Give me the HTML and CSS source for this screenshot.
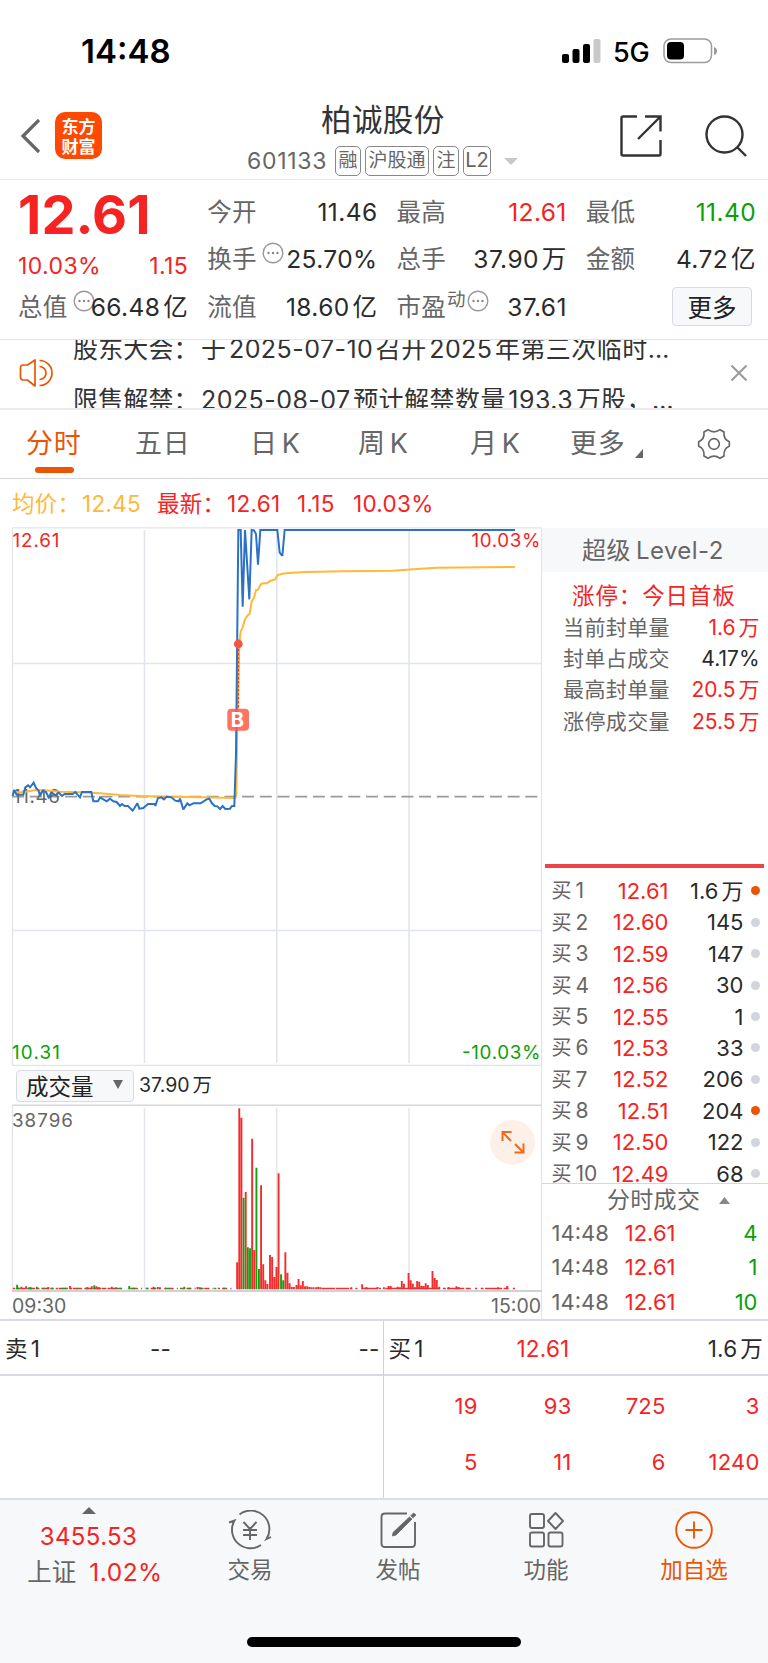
FILE: index.html
```
<!DOCTYPE html>
<html lang="zh-CN">
<head>
<meta charset="utf-8">
<title>柏诚股份 601133</title>
<link rel="stylesheet" href="styles.css">
</head>
<body>
<div class="app">
  <div class="status">
    <span class="clock">14:48</span>
    <svg class="signal" width="39" height="25" viewBox="0 0 39 25"><rect x="0" y="15" width="7" height="9" rx="2"/><rect x="10.500" y="10" width="7" height="14" rx="2"/><rect x="21" y="5" width="7" height="19" rx="2"/><rect x="31.500" y="0" width="7" height="24" rx="2" fill="#c9c9c9"/></svg>
    <span class="net">5G</span>
    <svg class="battery" width="55" height="26" viewBox="0 0 55 26"><rect x="1" y="1" width="47.500" height="23.500" rx="7" fill="none" stroke="#9b9b9b" stroke-width="1.500"/><rect x="4" y="4" width="17" height="17.500" rx="4"/><path d="M51 9q3 1 3 4t-3 4z" fill="#9b9b9b"/></svg>
  </div>

  <header class="header">
    <svg class="back" width="22" height="36" viewBox="0 0 22 36"><path d="M19 2 3 18 19 34" fill="none" stroke="#666" stroke-width="3.200"/></svg>
    <div class="logo"><span>东方</span><span>财富</span></div>
    <div class="title">
      <h1>柏诚股份</h1>
      <div class="codes"><span class="code">601133</span><b>融</b><b class="w3">沪股通</b><b class="w1">注</b><b class="w2">L2</b><i></i></div>
    </div>
    <svg class="share" width="42" height="42" viewBox="0 0 42 42"><g fill="none" stroke="#333" stroke-width="2.400"><path d="M17 1.500H3Q1.500 1.500 1.500 3V39Q1.500 40.500 3 40.500H39Q40.500 40.500 40.500 39V25"/><path d="M25 1.500H40.500V16.500M40.500 1.500 18 24"/></g></svg>
    <svg class="search" width="42" height="42" viewBox="0 0 42 42"><g fill="none" stroke="#333" stroke-width="2.400"><circle cx="19.500" cy="19.500" r="18"/><path d="M32 32 41 41"/></g></svg>
  </header>

  <section class="quote">
    <div class="col lead">
      <strong class="price">12.61</strong>
      <div class="row chg red"><span>10.03%</span><span>1.15</span></div>
      <div class="row"><label>总值<svg class="dots" viewBox="0 0 22 22"><use href="#more"/></svg></label><span>66.48<u>亿</u></span></div>
    </div>
    <div class="col">
      <div class="row"><label>今开</label><span>11.46</span></div>
      <div class="row"><label>换手<svg class="dots" viewBox="0 0 22 22"><use href="#more"/></svg></label><span>25.70%</span></div>
      <div class="row"><label>流值</label><span>18.60<u>亿</u></span></div>
    </div>
    <div class="col">
      <div class="row"><label>最高</label><span class="red">12.61</span></div>
      <div class="row"><label>总手</label><span>37.90<u>万</u></span></div>
      <div class="row"><label>市盈<sup>动</sup><svg class="dots tight" viewBox="0 0 22 22"><g id="more"><circle cx="11" cy="11" r="9.800" fill="none" stroke="#999" stroke-width="1.400"/><g fill="#888"><circle cx="6.500" cy="11" r="1.200"/><circle cx="11" cy="11" r="1.200"/><circle cx="15.500" cy="11" r="1.200"/></g></g></svg></label><span>37.61</span></div>
    </div>
    <div class="col">
      <div class="row"><label>最低</label><span class="green">11.40</span></div>
      <div class="row"><label>金额</label><span>4.72<u>亿</u></span></div>
      <div class="row end"><button class="morebtn">更多</button></div>
    </div>
  </section>

  <section class="notice">
    <svg width="34" height="30" viewBox="0 0 34 30"><g fill="none" stroke="#ea5504" stroke-width="1.700" stroke-linejoin="round"><path d="M16 2V28L8.500 22H4Q1.500 22 1.500 19V10Q1.500 7 4 7H8.500Z"/><path d="M20.500 2.500A12.500 12.500 0 0 1 20.500 27.500M20.500 8.500A6.500 6.500 0 0 1 20.500 21.500"/></g></svg>
    <div class="lines">
      <p><span class="k">股东大会：</span><span>于<u>2025-07-10</u><u>召开</u><u>2025</u><u>年第三次临时</u>…</span></p>
      <p><span class="k">限售解禁：</span><span>2025-08-07<u>预计解禁数量</u><u>193.3</u><u>万股，</u>…</span></p>
    </div>
    <svg class="close" width="18" height="18" viewBox="0 0 18 18"><path d="M1.500 1.500 16.500 16.500M16.500 1.500 1.500 16.500" stroke="#999" stroke-width="2"/></svg>
  </section>

  <nav class="tabs">
    <span class="tab on">分时</span><span class="tab">五日</span><span class="tab">日<u>K</u></span><span class="tab">周<u>K</u></span><span class="tab">月<u>K</u></span><span class="tab more">更多<svg width="8" height="9" viewBox="0 0 8 9"><path d="M8 0V9H0Z" fill="#666"/></svg></span>
    <svg class="gear" width="34" height="32" viewBox="937 52 102 96"><g fill="none" stroke="#666" stroke-width="5" stroke-linejoin="round"><path d="M970 57Q988 70 1006 57L1018 64Q1016 86 1034 93V107Q1016 114 1018 136L1006 143Q988 130 970 143L958 136Q960 114 942 107V93Q960 86 958 64Z"/><circle cx="988" cy="100" r="16"/></g></svg>
  </nav>

  <div class="info"><span class="avg">均价：</span><span class="avg v1">12.45</span><span class="v2">最新：</span><span class="v3">12.61</span><span class="v4">1.15</span><span>10.03%</span></div>

  <main class="main">
    <div class="charts">
      <svg class="chart" width="542" height="539" viewBox="0 527 542 539">
        <g stroke="#e2e5ec" stroke-width="1.600" fill="none">
          <path d="M12.500 1066V527.800H542M12 1065.500H542" stroke="#e3e5e9" stroke-width="1.300"/>
          <path d="M144.500 530V1063M276.800 530V1063M409 530V1063M12 663.500H541M12 930.500H541"/>
        </g>
        <path d="M12 796.700H541" stroke="#999" stroke-width="1.800" stroke-dasharray="12 5.700"/>
        <text x="13" y="802.500" textLength="47" class="lab">11.46</text>
        <g fill="none" stroke-linejoin="round" transform="translate(200 520) scale(.33333)">
          <path stroke="#ffb838" stroke-width="6" d="M-560 818-530 816-490 810-450 812-420 815-360 817-300 820-240 825-180 828-100 830 0 832 105 834 109 826 113 560 116 450 118 370 122 335 128 322 135 298 142 287 149 282 155 244 162 233 168 210 174 209 182 193 188 190 200 190 212 182 226 178 233 165 248 161 265 159 320 156 430 154 580 152 640 148 710 143 945 141"/>
          <path stroke="#2b72c4" stroke-width="6" stroke-linejoin="miter" stroke-miterlimit="2" d="M-562 828-558 810-550 824-530 824-524 802-516 796-510 802-499 788-492 804-484 812-480 828-472 812-462 816-454 832-444 818-434 826-424 818-414 828-406 822-382 822-374 816-360 832-354 816-326 816-320 844-306 844-300 832-290 838-280 844-270 836-260 844-250 846-240 858-234 852-226 858-216 858-202 872-188 850-182 866-170 864-156 852-136 852-134 858-126 834-116 832-108 838-100 830-86 832-74 842-64 844-60 836-50 868-38 850-32 856-20 850 2 850 20 838 28 836 36 850 44 858 52 859 60 867 68 858 76 867 90 866 96 858 103 858 108 700 115 30 122 30 128 260 135 30 148 238 155 30 162 31 168 42 174 134 181 30 232 30 239 98 247 108 254 30 945 30"/>
        </g>
        <path d="M238.300 649V710" stroke="#f5402c" stroke-width="1.700" stroke-dasharray="2.500 1.500"/>
        <circle cx="238.300" cy="644" r="4.400" fill="#f5553f"/>
        <rect x="227.300" y="708.700" width="21.700" height="22" rx="4" fill="#ff5a46" fill-opacity=".85"/>
        <text x="230.800" y="727" class="mark">B</text>
        <text x="12.500" y="547" textLength="47" class="lab r">12.61</text>
        <text x="471.500" y="547" textLength="69" class="lab r">10.03%</text>
        <text x="12" y="1058.500" textLength="48" class="lab g">10.31</text>
        <text x="462" y="1058.500" textLength="78.500" class="lab g">-10.03%</text>
      </svg>
      <div class="volbar"><button class="sel">成交量<svg width="10" height="9" viewBox="0 0 10 9"><path d="M0 0H10L5 9Z" fill="#666"/></svg></button><span>37.90<u>万</u></span></div>
      <svg class="chart" width="542" height="188" viewBox="0 1103 542 188">
        <path d="M12 1104.300H542" stroke="#d5d8e0" stroke-width="1.500"/>
        <path d="M12.500 1104V1290M144.500 1107V1288M276.800 1107V1288M409 1107V1288" stroke="#e2e5ec" stroke-width="1.400"/>
        <text x="12" y="1126" textLength="61" class="lab">38796</text>
        <g fill="none" stroke-width="5.300" transform="translate(0 1040) scale(.35714 .33333)">
          <path stroke="#f42c2c" stroke-width="5" stroke-dasharray="6 2 14 3 9 6" d="M36 742.500H340"/>
          <path stroke="#f42c2c" stroke-width="5" stroke-dasharray="6 6 14 9 3 12" d="M360 742.500H660"/>
          <path stroke="#12a012" stroke-width="5" stroke-dasharray="6 24 12 30 6 18" d="M48 742.500H640"/>
          <path stroke="#f42c2c" d="M60 745V737M73 745V736M135 745V738M196 745V735M245 745V738M257 745V736M270 745V736M276 745V738M313 745V737M430 745V737M442 745V738M448 745V739M553 745V738M559 745V739"/>
          <path stroke="#12a012" d="M48 745V731M85 745V738M103 745V737M264 745V733M325 745V739M362 745V735M516 745V737"/>
          <path stroke="#f42c2c" d="M664 745V664M670 745V202M676 745V230M688 745V453M706 745V293M712 745V627M731 745V433M737 745V670M743 745V718M749 745V729M756 745V642M762 745V648M768 745V708M774 745V678M780 745V397M799 745V634M805 745V695M811 745V727M817 745V738M823 745V738M830 745V732M836 745V714M842 745V733M848 745V720M854 745V736M860 745V736M866 745V738M872 745V739M878 745V739M885 745V739M891 745V737M897 745V739"/>
          <path stroke="#12a012" d="M682 745V470M694 745V619M700 745V622M718 745V380M725 745V684M787 745V700M793 745V718"/>
          <path stroke="#f42c2c" stroke-width="5" stroke-dasharray="38 2" d="M900 742.500H985"/>
          <path stroke="#f42c2c" stroke-width="5" stroke-dasharray="6 12 44 4" d="M995 742.500H1090"/>
          <path stroke="#f42c2c" stroke-width="5" d="M1088 742.500H1232"/>
          <path stroke="#f42c2c" stroke-width="5" stroke-dasharray="8 4 48 4 14 12 6 10" d="M1240 742.500H1448"/>
          <path stroke="#f42c2c" d="M984 745V739M1014 745V730M1026 745V738M1057 745V738M1075 745V739M1088 745V735M1094 745V735M1113 745V737M1119 745V739M1125 745V720M1131 745V728M1144 745V696M1150 745V718M1156 745V728M1162 745V739M1168 745V720M1174 745V722M1180 745V734M1186 745V735M1192 745V727M1198 745V732M1211 745V690M1217 745V711M1223 745V717M1230 745V737M1256 745V738M1278 745V736M1284 745V738M1395 745V739M1420 745V735"/>
        </g>
        <path d="M12 1290H542" stroke="#cfd1d6" stroke-width="1.800"/>
        <circle cx="512.500" cy="1141.300" r="22.500" fill="#fdf0e9"/>
        <path d="M502.500 1140V1131H511.500M502.500 1131 511 1140M523.500 1142.500V1151.500H514.500M523.500 1151.500 515 1143" fill="none" stroke="#ef6a1c" stroke-width="2"/>
      </svg>
      <div class="times"><span>09:30</span><span>15:00</span></div>
    </div>

    <aside class="side">
      <div class="lv2">超级<u>Level-2</u></div>
      <div class="limit">涨停：今日首板</div>
      <div class="stat"><label>当前封单量</label><span class="red">1.6<u>万</u></span></div>
      <div class="stat"><label>封单占成交</label><span>4.17%</span></div>
      <div class="stat"><label>最高封单量</label><span class="red">20.5<u>万</u></span></div>
      <div class="stat"><label>涨停成交量</label><span class="red">25.5<u>万</u></span></div>
      <div class="redbar"></div>
      <div class="book">
        <div><label>买<u>1</u></label><em>12.61</em><span>1.6<u>万</u></span><i class="hot"></i></div>
        <div><label>买<u>2</u></label><em>12.60</em><span>145</span><i></i></div>
        <div><label>买<u>3</u></label><em>12.59</em><span>147</span><i></i></div>
        <div><label>买<u>4</u></label><em>12.56</em><span>30</span><i></i></div>
        <div><label>买<u>5</u></label><em>12.55</em><span>1</span><i></i></div>
        <div><label>买<u>6</u></label><em>12.53</em><span>33</span><i></i></div>
        <div><label>买<u>7</u></label><em>12.52</em><span>206</span><i></i></div>
        <div><label>买<u>8</u></label><em>12.51</em><span>204</span><i class="hot"></i></div>
        <div><label>买<u>9</u></label><em>12.50</em><span>122</span><i></i></div>
        <div><label>买<u>10</u></label><em>12.49</em><span>68</span><i></i></div>
      </div>
      <div class="deals"><span>分时成交</span><svg width="11" height="7" viewBox="0 0 11 7"><path d="M0 7H11L5.500 0Z" fill="#888"/></svg></div>
      <div class="deal"><label>14:48</label><em>12.61</em><span>4</span></div>
      <div class="deal"><label>14:48</label><em>12.61</em><span>1</span></div>
      <div class="deal"><label>14:48</label><em>12.61</em><span>10</span></div>
    </aside>
  </main>

  <section class="depth">
    <div class="sell"><div class="top"><span>卖<u>1</u></span><span>--</span><span>--</span></div></div>
    <div class="buy">
      <div class="top"><span>买<u>1</u></span><span class="red">12.61</span><span>1.6<u>万</u></span></div>
      <div class="queue"><span>19</span><span>93</span><span>725</span><span>3</span><span>5</span><span>11</span><span>6</span><span>1240</span></div>
    </div>
  </section>

  <footer class="foot">
    <div class="bar">
      <div class="index"><svg width="14" height="7" viewBox="0 0 14 7"><path d="M0 7H14L7 0Z" fill="#666"/></svg><span class="red pts">3455.53</span><span class="sh">上证<b class="red">1.02%</b></span></div>
      <div class="item"><svg width="44" height="40" viewBox="-22 -20 44 40"><g fill="none" stroke="#666" stroke-width="1.900"><path d="M-10.500-15.500A18.500 18.500 0 0 1 16.500 9L21 7M-21-7.500-15.500-9.500A18.500 18.500 0 0 0 11 15M-6.500-8 0-1 6.500-8M0-1V10M-7 0H7M-7 5H7"/></g></svg><span>交易</span></div>
      <div class="item"><svg width="44" height="40" viewBox="-22 -20 44 40"><path d="M9-16.500H-13Q-16.500-16.500-16.500-13V13.500Q-16.500 17-13 17H13.500Q17 17 17 13.500V-8" fill="none" stroke="#666" stroke-width="1.900"/><path d="M11.500-13 14-11-2 5-5.500 6-5 2.500ZM12.800-14.200 15.500-17 18-15 15.200-12.200Z" fill="#666" stroke="#666" stroke-width=".8"/></svg><span>发帖</span></div>
      <div class="item"><svg width="44" height="40" viewBox="-22 -20 44 40"><g fill="none" stroke="#666" stroke-width="1.900"><rect x="-16" y="-16" width="14" height="14" rx="2"/><rect x="-16" y="2.500" width="14" height="14" rx="2"/><rect x="2.500" y="2.500" width="14" height="14" rx="2"/><path d="M9.500-17 17-9 9.500-1 2-9Z" stroke-linejoin="round"/></g></svg><span>功能</span></div>
      <div class="item add"><svg width="44" height="40" viewBox="-22 -20 44 40"><g fill="none" stroke="#ea5504" stroke-width="1.900"><circle r="17.800"/><path d="M-8.500 0H8.500M0-8.500V8.500"/></g></svg><span>加自选</span></div>
    </div>
    <div class="home"></div>
  </footer>
</div>
</body>
</html>
```
FILE: styles.css
```
* { box-sizing: border-box; margin: 0; padding: 0; }
body { background: #fff; }
u, i, em { font-style: normal; text-decoration: none; }
u { margin-left: 4px; }
svg { display: block; flex: none; }

.app {
  width: 768px;
  height: 1663px;
  overflow: hidden;
  display: flex;
  flex-direction: column;
  font-family: Inter, "Noto Sans CJK SC", sans-serif;
  font-size: 24px;
  line-height: 1;
  color: #2a2a2a;
  white-space: nowrap;
}
.app > * { flex: none; }
.red { color: #f62323; }
.green { color: #0aa00a; }
label { color: #666; }

/* status bar */
.status { height: 90px; display: flex; align-items: center; padding: 12px 50px 0 81px; color: #000; }
.clock { font-size: 33px; font-weight: 600; flex: 1; }
.signal { margin-right: 12px; }
.net { font-size: 27px; font-weight: 500; width: 50px; letter-spacing: -.3px; padding-top: 2px; }

/* header */
.header { height: 90px; display: flex; align-items: flex-start; border-bottom: 1px solid #e8e8e8; }
.back { margin: 28px 13px 0 20px; }
.logo { width: 47px; height: 47px; margin-top: 22px; border-radius: 10px; background: #ff4800; color: #fff; display: flex; flex-direction: column; align-items: center; justify-content: center; font: 700 17px/20px "Noto Sans CJK SC", sans-serif; }
.title { flex: 1; padding-left: 145px; }
.title h1 { font-size: 30.500px; font-weight: 400; line-height: 34px; margin: 13px 0 9px 74px; letter-spacing: .4px; color: #333; }
.codes { display: flex; align-items: center; height: 30px; color: #666; }
.code { font-size: 23px; width: 88px; letter-spacing: .7px; }
.codes b { width: 26px; height: 30px; margin-right: 4px; border: 1.500px solid #888; border-radius: 5px; font-weight: 400; font-size: 19px; line-height: 27px; display: flex; justify-content: center; }
.codes .w3 { width: 64px; }
.codes .w2 { width: 28px; font-size: 20px; }
.codes i { border: 7px solid transparent; border-top-color: #c8c8c8; border-bottom: 0; margin-left: 9px; }
.share { margin: 25px 43px 0 0; }
.search { margin: 25px 21px 0 0; }

/* quote */
.quote { height: 160px; display: flex; border-bottom: 1px solid #e3e3e3; padding: 8px 12px 0 18px; }
.col { width: 170.500px; margin-right: 19px; }
.col:last-child { margin-right: 0; }
.col.lead { width: 170.500px; }
.price { display: block; height: 54px; font-size: 54px; line-height: 54px; font-weight: 700; color: #f62323; letter-spacing: .1px; }
.row { height: 47.500px; display: flex; align-items: center; justify-content: space-between; font-size: 24.500px; }
.row label { display: flex; align-items: center; letter-spacing: .3px; }
.row u { margin-left: 3px; }
.row span { letter-spacing: .4px; }
.chg { height: 41px; font-size: 23px; padding-top: 7px; }
.chg + .row { height: 48px; }
.row.end { justify-content: flex-end; padding-right: 4px; }
.row span { position: relative; }
.dots { width: 22px; height: 22px; margin: -12px -22px 0 5px; }
.dots.tight { margin-left: 1px; }
sup { font-size: 18.500px; align-self: flex-start; margin: -5px 0 0 1px; line-height: 18px; }
.morebtn { width: 80px; height: 39px; border: 1.500px solid #d8dbe2; border-radius: 4px; background: #f7f8fa; color: #222; font: 400 24.500px/32px "Noto Sans CJK SC", sans-serif; }

/* notice */
.notice { height: 70px; display: flex; align-items: center; border-bottom: 2px solid #ececee; padding: 0 20px 2px 19px; }
.lines { flex: 1; height: 68px; overflow: hidden; padding-left: 20px; margin-top: 1px; color: #333; }
.lines p { height: 51px; line-height: 50px; font-size: 25px; display: flex; margin-top: -16px; letter-spacing: .45px; }
.lines p + p { margin-top: 0; }
.lines u { margin-left: 2.500px; }
.lines .k { width: 128px; letter-spacing: .15px; }

/* tabs */
.tabs { height: 69px; display: flex; align-items: center; border-bottom: 1.500px solid #d5d7e2; color: #666; font-size: 27px; padding-left: 26px; }
.tab { height: 68px; line-height: 68px; width: 109px; flex: none; letter-spacing: .7px; }
.tab:nth-child(2) { width: 115px; }
.tab:nth-child(3) { width: 108px; }
.tab:nth-child(4) { width: 112px; }
.tab:nth-child(5) { width: 100px; }
.tab.on { color: #ea5504; display: flex; flex-direction: column; }
.tab.on::after { content: ""; width: 39px; height: 6px; border-radius: 3px; background: #ea5504; margin: -11px 0 0 9px; }
.tab.more { width: 127px; display: flex; align-items: center; }
.tab.more svg { margin: 18px 0 0 10px; }
.gear { margin-top: -1px; }

.info { height: 48px; display: flex; align-items: center; padding: 2px 0 0 12px; font-size: 22.500px; color: #f62323; letter-spacing: .3px; }
.info .avg { color: #ffb838; width: 70px; }
.info .v1 { width: 75px; }
.info .v2 { width: 70px; }
.info .v3 { width: 70px; }
.info .v4 { width: 56px; }

/* charts */
.main { height: 794px; display: flex; border-bottom: 2px solid #d8dae3; }
.charts { width: 542px; border-right: 1.500px solid #dfe1e8; flex: none; }
.chart { overflow: hidden; }
.lab { font-size: 18.800px; fill: #666; }
.lab.r { fill: #f62323; }
.lab.g { fill: #0aa00a; }
.mark { font-size: 20px; font-weight: 700; fill: #fff; }
.volbar { height: 38px; display: flex; align-items: center; padding: 2px 0 0 16px; font-size: 19.500px; }
.volbar u { margin-left: 3px; }
.sel { width: 118px; height: 32px; margin: -1px 5px 0 0; border: 1.500px solid #d8dbe2; border-radius: 4px; background: #f7f8fa; display: flex; align-items: center; justify-content: space-between; padding: 0 10px 2px 9px; color: #222; font: 400 22.500px/26px "Noto Sans CJK SC", sans-serif; }
.times { height: 27px; display: flex; justify-content: space-between; align-items: flex-end; padding: 0 0 3px 12px; font-size: 19.500px; color: #666; }

/* level 2 panel */
.side { width: 226px; display: flex; flex-direction: column; }
.lv2 { height: 44px; margin-top: 1px; background: #f7f8fa; color: #666; font-size: 24px; line-height: 45px; padding-left: 40px; letter-spacing: .45px; }
.lv2 u { margin-left: 5px; }
.limit { height: 39px; color: #f62323; font-size: 22.500px; line-height: 47px; padding-left: 30px; letter-spacing: .9px; }
.stat { height: 31.500px; display: flex; align-items: center; justify-content: space-between; font-size: 21px; padding: 1px 8.500px 0 21px; }
.stat label { letter-spacing: .4px; }
.stat u { margin-left: 3px; }
.redbar { height: 4.500px; margin: 127px 4.500px 0 2.500px; background: #ec4545; }
.book { height: 317px; overflow: hidden; padding-top: 7px; border-bottom: 1.500px solid #d5d7e0; }
.book div { height: 31.450px; display: flex; align-items: center; font-size: 22px; }
.book label, .deal label { width: 60px; margin-left: 9.500px; }
.book label { font-size: 20px; }
.book label u { font-size: 21px; }
.book em, .deal em { width: 57px; color: #f62323; text-align: right; }
.book span { width: 75px; text-align: right; }
.book span u { margin-left: 3px; }
.book i { width: 9px; height: 9px; border-radius: 50%; background: #d2d5db; margin-left: 7.500px; }
.book .hot { background: #ea5504; }
.deals { height: 32px; display: flex; align-items: center; padding: 1px 0 0 65px; color: #666; font-size: 23px; letter-spacing: .3px; }
.deals svg { margin-left: 19px; }
.deal { height: 34.500px; display: flex; align-items: center; font-size: 22px; }
.deal em { width: 64px; }
.deal span { width: 82px; text-align: right; color: #0aa00a; }

/* depth */
.depth { height: 179px; display: flex; border-bottom: 2px solid #dcdee6; font-size: 22px; letter-spacing: .2px; }
.sell { width: 383.500px; border-right: 1.500px solid #d0d2db; }
.buy { flex: 1; }
.top { height: 55px; display: flex; justify-content: space-between; align-items: center; border-bottom: 2px solid #d8dae3; padding: 4px 5px 0 5px; font-size: 22.500px; }
.top u { margin-left: 3px; }
.top > span:first-child { width: 128px; }
.top > span:nth-child(2) { flex: 1; margin-left: 17px; }
.sell .top { padding-right: 3px; }
.buy .top > span:nth-child(2) { margin-left: 0; }
.queue { display: grid; grid-template-columns: 94px 94px 94px 94px; grid-auto-rows: 56px; line-height: 56px; padding-top: 2px; text-align: right; color: #f62323; }

/* footer */
.foot { height: 163px; background: #f7f8fa; color: #666; font-size: 22.500px; }
.bar { display: flex; height: 100px; padding-left: 14px; }
.index { width: 162px; display: flex; flex-direction: column; align-items: center; padding-top: 7px; }
.index svg { margin-right: 13px; }
.pts { margin: 11px 13px 11px 0; font-size: 24px; letter-spacing: .4px; }
.sh { display: flex; font-size: 24.500px; }
.sh b { font-weight: 400; margin-left: 13px; letter-spacing: .5px; }
.item { width: 148px; display: flex; flex-direction: column; align-items: center; padding-top: 10px; }
.item span { margin-top: 9px; }
.item.add { color: #ea5504; }
.home { width: 274px; height: 10px; border-radius: 5px; background: #000; margin: 37px auto 0; }
```
